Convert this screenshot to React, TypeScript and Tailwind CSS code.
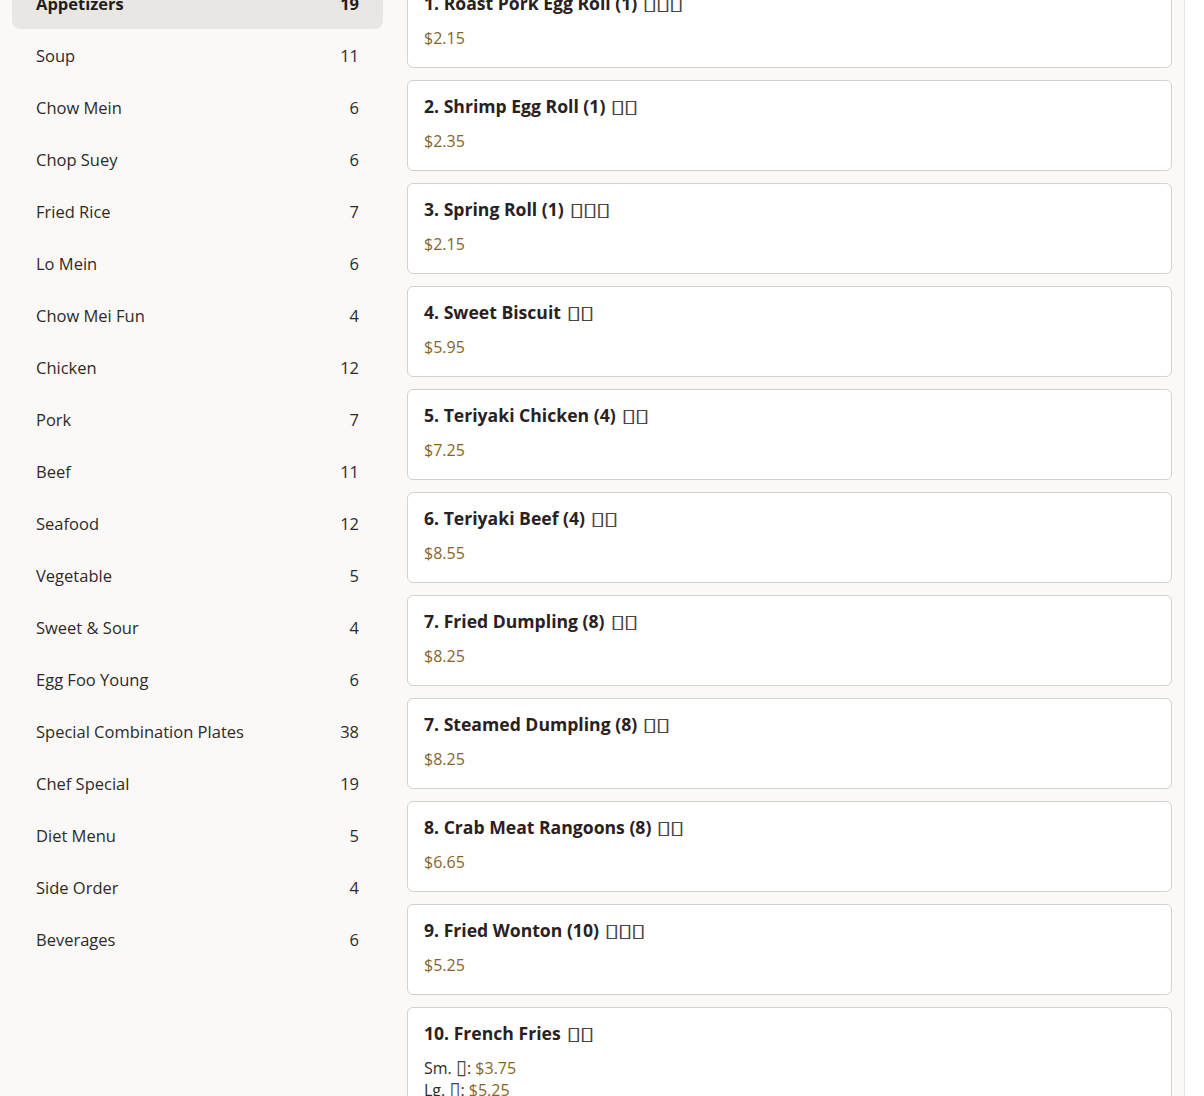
const categories = [
  { name: "Appetizers", count: 19 },
  { name: "Soup", count: 11 },
  { name: "Chow Mein", count: 6 },
  { name: "Chop Suey", count: 6 },
  { name: "Fried Rice", count: 7 },
  { name: "Lo Mein", count: 6 },
  { name: "Chow Mei Fun", count: 4 },
  { name: "Chicken", count: 12 },
  { name: "Pork", count: 7 },
  { name: "Beef", count: 11 },
  { name: "Seafood", count: 12 },
  { name: "Vegetable", count: 5 },
  { name: "Sweet & Sour", count: 4 },
  { name: "Egg Foo Young", count: 6 },
  { name: "Special Combination Plates", count: 38 },
  { name: "Chef Special", count: 19 },
  { name: "Diet Menu", count: 5 },
  { name: "Side Order", count: 4 },
  { name: "Beverages", count: 6 },
];

type Item = {
  title: string;
  boxes: number;
  price?: string;
  sizes?: { label: string; price: string }[];
};

const items: Item[] = [
  { title: "1. Roast Pork Egg Roll (1)", boxes: 3, price: "$2.15" },
  { title: "2. Shrimp Egg Roll (1)", boxes: 2, price: "$2.35" },
  { title: "3. Spring Roll (1)", boxes: 3, price: "$2.15" },
  { title: "4. Sweet Biscuit", boxes: 2, price: "$5.95" },
  { title: "5. Teriyaki Chicken (4)", boxes: 2, price: "$7.25" },
  { title: "6. Teriyaki Beef (4)", boxes: 2, price: "$8.55" },
  { title: "7. Fried Dumpling (8)", boxes: 2, price: "$8.25" },
  { title: "7. Steamed Dumpling (8)", boxes: 2, price: "$8.25" },
  { title: "8. Crab Meat Rangoons (8)", boxes: 2, price: "$6.65" },
  { title: "9. Fried Wonton (10)", boxes: 3, price: "$5.25" },
  {
    title: "10. French Fries",
    boxes: 2,
    sizes: [
      { label: "Sm.", price: "$3.75" },
      { label: "Lg.", price: "$5.25" },
    ],
  },
];

// missing-glyph boxes, as the page shows them
function Tofu({ n }: { n: number }) {
  return (
    <span
      className={
        n === 3
          ? "inline-block origin-left scale-x-[1.45] mr-[12px] font-['DejaVu_Sans',sans-serif] font-normal text-[19px] leading-none tracking-[-1.3px] text-[#4a4340]"
          : "inline-block origin-left scale-x-[1.45] mr-[8px] font-['DejaVu_Sans',sans-serif] font-normal text-[19px] leading-none tracking-[-1.3px] text-[#4a4340]"
      }
    >
      {"▯".repeat(n)}
    </span>
  );
}

export default function App() {
  return (
    <div className="h-screen overflow-hidden flex bg-[#faf9f7] text-[#2b2421] font-['Open_Sans',sans-serif]">
      {/* Sidebar */}
      <aside className="w-[395px] shrink-0 px-3">
        <ul className="-mt-[21px] flex flex-col gap-[2px]">
          {categories.map((c, i) => (
            <li
              key={c.name}
              className={
                i === 0
                  ? "h-[50px] px-6 flex items-center justify-between rounded-lg bg-[#e9e7e3] font-bold text-[#231d1a] text-[16.5px]"
                  : "h-[50px] px-6 flex items-center justify-between rounded-lg text-[#2f2a27] text-[16.5px]"
              }
            >
              <span>{c.name}</span>
              <span>{c.count}</span>
            </li>
          ))}
        </ul>
      </aside>

      {/* Menu items */}
      <main className="flex-1 px-3">
        <div className="-mt-[23px] flex flex-col gap-3">
          {items.map((it) => (
            <div
              key={it.title}
              className="bg-white border border-[#d5d1cb] rounded-md px-4 pt-[13px] pb-[17px]"
            >
              <h3 className="h-[25px] flex items-center gap-[5px] text-[17.6px] leading-[25px] font-bold text-[#2a211e]">
                <span>{it.title}</span>
                <Tofu n={it.boxes} />
              </h3>
              {it.price && (
                <div className="mt-[10px] text-[16px] leading-6 text-[#86652a]">{it.price}</div>
              )}
              {it.sizes && (
                <div className="mt-[11px] text-[16px] leading-[22px]">
                  {it.sizes.map((s) => (
                    <div key={s.label} className="text-[#2f2a27]">
                      {s.label}{" "}
                      <span className="font-['DejaVu_Sans',sans-serif] text-[20px] leading-none text-[#4a4340]">▯</span>:{" "}
                      <span className="text-[#86652a]">{s.price}</span>
                    </div>
                  ))}
                </div>
              )}
            </div>
          ))}
        </div>
      </main>

      <div className="w-5 shrink-0 bg-white border-l border-[#e6e4e0]" />
    </div>
  );
}
